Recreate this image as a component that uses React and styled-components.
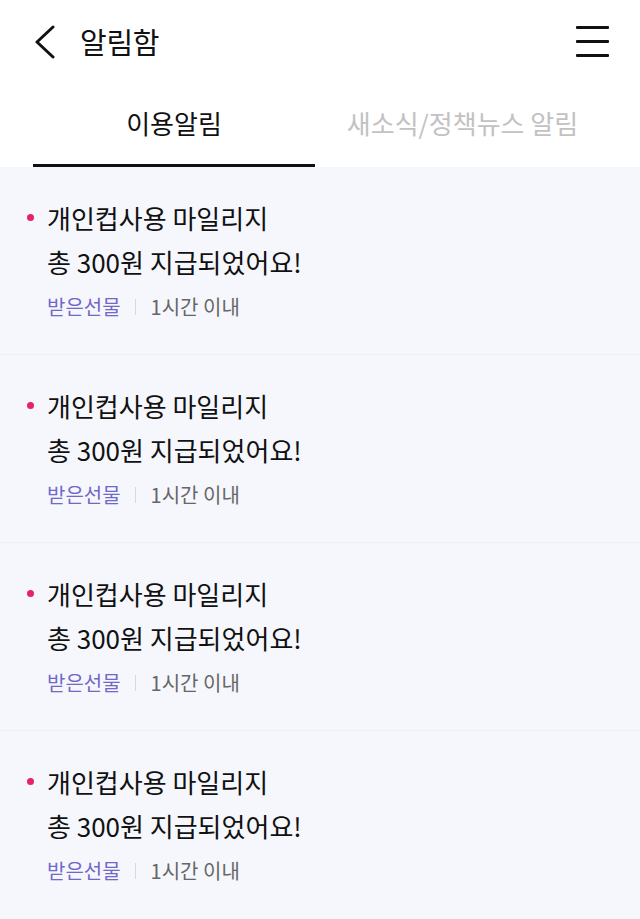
import React from 'react';
import styled, { createGlobalStyle } from 'styled-components';

const GlobalStyle = createGlobalStyle`
    body{
        margin:0;
        background:#f5f7fd;
        font-family:"Noto Sans CJK KR","Noto Sans",sans-serif;
        color:#111;
    }
`;

const notices = [
    { id: 1, line1: '개인컵사용 마일리지', line2: '총 300원 지급되었어요!', tag: '받은선물', time: '1시간 이내' },
    { id: 2, line1: '개인컵사용 마일리지', line2: '총 300원 지급되었어요!', tag: '받은선물', time: '1시간 이내' },
    { id: 3, line1: '개인컵사용 마일리지', line2: '총 300원 지급되었어요!', tag: '받은선물', time: '1시간 이내' },
    { id: 4, line1: '개인컵사용 마일리지', line2: '총 300원 지급되었어요!', tag: '받은선물', time: '1시간 이내' },
];

const App = () => {
    return (
        <>
            <GlobalStyle />
            <StyledPage>
                <StyledHeader>
                    <StyledBack aria-label="뒤로">
                        <svg width="24" height="34" viewBox="0 0 24 34">
                            <path d="M20 2 L4 17 L20 32" fill="none" stroke="#111" strokeWidth="3" strokeLinecap="round" strokeLinejoin="round" />
                        </svg>
                    </StyledBack>
                    <StyledTitle>알림함</StyledTitle>
                    <StyledMenu aria-label="메뉴">
                        <span />
                        <span />
                        <span />
                    </StyledMenu>
                </StyledHeader>
                <StyledTabs>
                    <StyledTab active>이용알림</StyledTab>
                    <StyledTab>새소식/정책뉴스 알림</StyledTab>
                </StyledTabs>
                <StyledList>
                    {notices.map(n => (
                        <StyledItem key={n.id}>
                            <StyledDot />
                            <div>
                                <StyledMessage>
                                    {n.line1}
                                    <br />
                                    {n.line2}
                                </StyledMessage>
                                <StyledMeta>
                                    <StyledTag>{n.tag}</StyledTag>
                                    <StyledDivider />
                                    <StyledTime>{n.time}</StyledTime>
                                </StyledMeta>
                            </div>
                        </StyledItem>
                    ))}
                </StyledList>
            </StyledPage>
        </>
    );
};

const StyledPage = styled.div`
    width:640px;
    min-height:919px;
    background:#f5f7fd;
`

const StyledHeader = styled.header`
    height:82px;
    display:flex;
    align-items:center;
    padding:0 31px 0 33px;
    background:white;
    box-sizing:border-box;
`

const StyledBack = styled.button`
    border:none;
    background:none;
    padding:0;
    display:flex;
    margin-right:23px;
    margin-top:1px;
`

const StyledTitle = styled.h1`
    flex:1;
    margin:0;
    font-size:29px;
    font-weight:400;
    letter-spacing:-0.3px;
    color:#111;
`

const StyledMenu = styled.button`
    border:none;
    background:none;
    padding:0;
    width:33px;
    display:flex;
    flex-direction:column;
    gap:11px;
    span{
        display:block;
        height:3px;
        border-radius:1px;
        background:#111;
    }
`

const StyledTabs = styled.nav`
    display:flex;
    height:85px;
    padding:0 30px 0 33px;
    background:white;
`

const StyledTab = styled.div`
    width:${p => p.active ? '282px' : 'auto'};
    flex:${p => p.active ? 'none' : '1'};
    display:flex;
    align-items:center;
    justify-content:center;
    font-size:26px;
    font-weight:400;
    color:${p => p.active ? '#111' : '#c2c2c2'};
    border-bottom:3px solid ${p => p.active ? '#111' : 'transparent'};
    box-sizing:border-box;
    padding-bottom:1px;
`

const StyledList = styled.ul`
    list-style:none;
    margin:0;
    padding:0;
`

const StyledItem = styled.li`
    display:flex;
    height:188px;
    box-sizing:border-box;
    padding:29px 30px 0 27px;
    border-bottom:1px solid #eceff8;
    &:last-child{
        border-bottom:none;
    }
`

const StyledDot = styled.span`
    width:7px;
    height:7px;
    border-radius:50%;
    background:#e8216d;
    margin:18px 13px 0 0;
    flex:none;
`

const StyledMessage = styled.p`
    margin:0;
    font-size:26px;
    line-height:44px;
    font-weight:400;
    color:#111;
`

const StyledMeta = styled.div`
    display:flex;
    align-items:center;
    margin-top:9px;
    font-size:20px;
    line-height:28px;
`

const StyledTag = styled.span`
    color:#7168c8;
`

const StyledDivider = styled.span`
    width:1px;
    height:16px;
    background:#d9d9de;
    margin:0 15px 0 14px;
`

const StyledTime = styled.span`
    color:#666;
`

export default App;
